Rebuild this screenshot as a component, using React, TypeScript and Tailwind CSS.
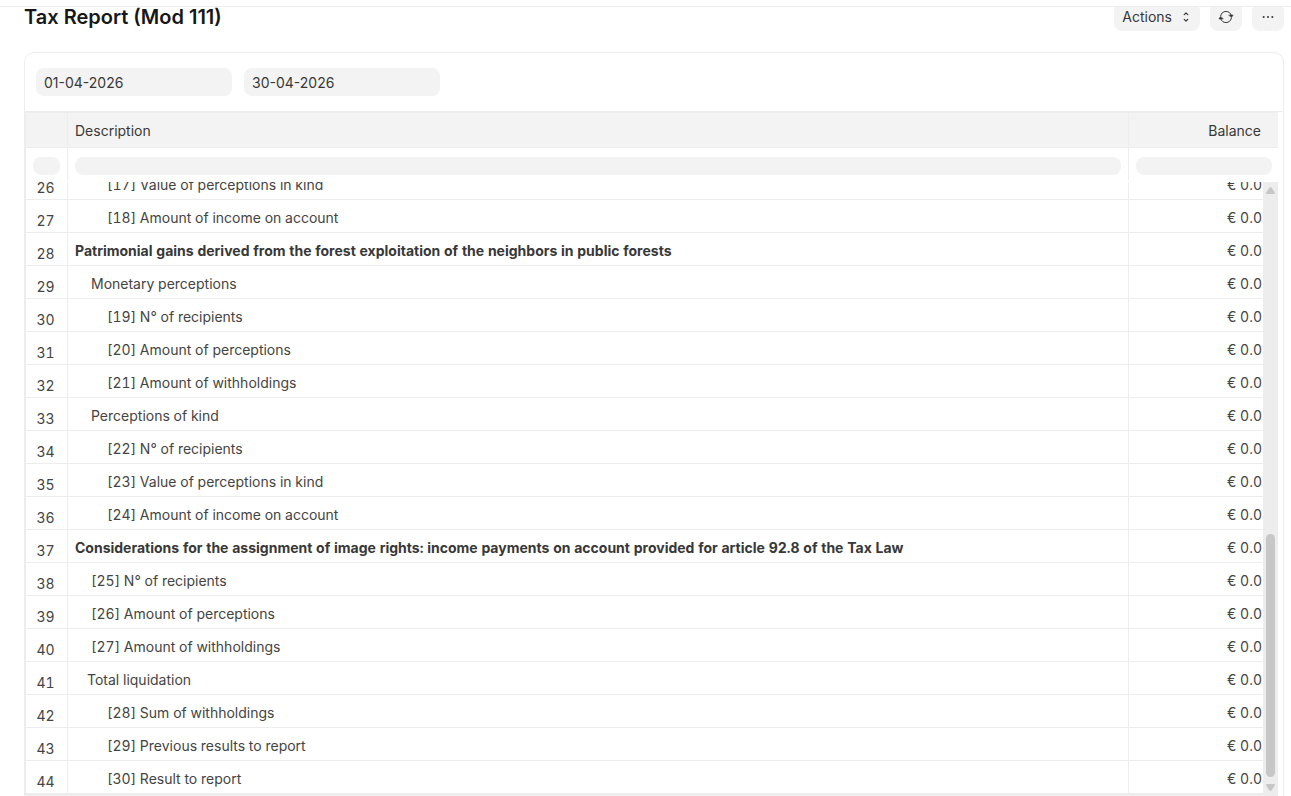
import React from "react";

type Level = "root" | "total" | "child" | "leaf";
type Row = { n: number; text: string; level: Level; bold?: boolean };

const rows: Row[] = [
  { n: 26, text: "[17] Value of perceptions in kind", level: "leaf" },
  { n: 27, text: "[18] Amount of income on account", level: "leaf" },
  { n: 28, text: "Patrimonial gains derived from the forest exploitation of the neighbors in public forests", level: "root", bold: true },
  { n: 29, text: "Monetary perceptions", level: "child" },
  { n: 30, text: "[19] N° of recipients", level: "leaf" },
  { n: 31, text: "[20] Amount of perceptions", level: "leaf" },
  { n: 32, text: "[21] Amount of withholdings", level: "leaf" },
  { n: 33, text: "Perceptions of kind", level: "child" },
  { n: 34, text: "[22] N° of recipients", level: "leaf" },
  { n: 35, text: "[23] Value of perceptions in kind", level: "leaf" },
  { n: 36, text: "[24] Amount of income on account", level: "leaf" },
  { n: 37, text: "Considerations for the assignment of image rights: income payments on account provided for article 92.8 of the Tax Law", level: "root", bold: true },
  { n: 38, text: "[25] N° of recipients", level: "child" },
  { n: 39, text: "[26] Amount of perceptions", level: "child" },
  { n: 40, text: "[27] Amount of withholdings", level: "child" },
  { n: 41, text: "Total liquidation", level: "total" },
  { n: 42, text: "[28] Sum of withholdings", level: "leaf" },
  { n: 43, text: "[29] Previous results to report", level: "leaf" },
  { n: 44, text: "[30] Result to report", level: "leaf" },
];

const indent: Record<Level, string> = {
  root: "pl-[7px]",
  total: "pl-[19px]",
  child: "pl-[23px]",
  leaf: "pl-[39px]",
};

function PageHeader() {
  return (
    <header className="mt-1.5 flex h-[25px] shrink-0 items-end justify-between overflow-hidden border-t border-[#ededed] pr-[7px] pl-6">
      <h1 className="text-xl leading-7 font-semibold text-[#171717]">Tax Report (Mod 111)</h1>
      <div className="flex gap-2.5">
        <button type="button" className="flex h-7 items-center gap-2 rounded-lg bg-[#f3f3f3] px-2 text-sm text-[#383838]">
          Actions
          <svg width="12" height="12" viewBox="0 0 12 12" fill="none" stroke="currentColor" strokeWidth="1.2" strokeLinecap="round" strokeLinejoin="round">
            <path d="M4.2 3.6 6 2 7.8 3.6M4.2 8.4 6 10 7.8 8.4" />
          </svg>
        </button>
        <button type="button" aria-label="Refresh" className="flex h-7 w-8 items-center justify-center rounded-lg bg-[#f3f3f3] text-[#383838]">
          <svg width="16" height="16" viewBox="0 0 16 16" fill="none" stroke="currentColor" strokeLinecap="round" strokeLinejoin="round">
            <path d="M2.7 6.6a5.5 5.5 0 0 1 10.6-.2M13.3 9.4a5.5 5.5 0 0 1-10.6.2" />
            <path fill="currentColor" strokeWidth=".6" d="M11.1 6h4l-1.6 2.4zM4.9 10h-4l1.6-2.4z" />
          </svg>
        </button>
        <button type="button" aria-label="More options" className="flex h-7 w-8 items-center justify-center rounded-lg bg-[#f3f3f3] text-[#383838]">
          <svg width="16" height="16" viewBox="0 0 16 16" fill="currentColor">
            <circle cx="3.7" cy="8" r="1" />
            <circle cx="8" cy="8" r="1" />
            <circle cx="12.3" cy="8" r="1" />
          </svg>
        </button>
      </div>
    </header>
  );
}

function Scrollbar() {
  return (
    <div aria-hidden="true" className="flex w-[15px] shrink-0 flex-col items-center bg-[#ededed] pt-[5px] pb-[3px]">
      <svg width="9" height="7" viewBox="0 0 9 7" fill="#c7c7c7">
        <path d="M4.5 0C5 0 5.4.3 5.7.8L8.8 5.5C9.2 6.2 9 7 8 7H1C0 7-.2 6.2.2 5.5L3.3.8C3.6.3 4 0 4.5 0Z" />
      </svg>
      <div className="grow-[340]" />
      <div className="w-[9px] grow-[243] rounded-full bg-[#c7c7c7]" />
      <svg className="mt-[7px]" width="9" height="7" viewBox="0 0 9 7" fill="#c7c7c7">
        <path d="M4.5 7C4 7 3.6 6.7 3.3 6.2L.2 1.5C-.2.8 0 0 1 0H8C9 0 9.2.8 8.8 1.5L5.7 6.2C5.4 6.7 5 7 4.5 7Z" />
      </svg>
    </div>
  );
}

export default function App() {
  return (
    <div className="flex h-screen flex-col overflow-hidden bg-white font-['Inter','Liberation_Sans',sans-serif] text-sm text-[#383838]">
      <PageHeader />
      <main className="mt-[21px] mr-[7px] ml-6 flex min-h-0 flex-1 flex-col rounded-t-[10px] border border-b-0 border-[#ededed]">
        <form className="flex gap-3 px-[11px] py-[15px]">
          <input aria-label="From date" defaultValue="01-04-2026" className="h-7 w-[196px] rounded-lg bg-[#f3f3f3] px-2 outline-none" />
          <input aria-label="To date" defaultValue="30-04-2026" className="h-7 w-[196px] rounded-lg bg-[#f3f3f3] px-2 outline-none" />
        </form>
        <div className="border-t border-[#ededed]" />
        <div className="mr-[5px] flex min-h-0 flex-1 flex-col border-l border-[#ededed]">
          <table className="w-full shrink-0 table-fixed border-separate border-spacing-0">
            <colgroup>
              <col className="w-[42px]" />
              <col />
              <col className="w-[149px]" />
            </colgroup>
            <thead>
              <tr className="h-9 bg-[#f3f3f3]">
                <th aria-label="Row" className="border-t border-r border-b border-[#ededed]" />
                <th className="border-t border-r border-b border-[#ededed] px-[7px] pt-0.5 text-left font-normal">Description</th>
                <th className="border-t border-b border-[#ededed] pt-0.5 pr-[17px] text-right font-normal">Balance</th>
              </tr>
              <tr className="h-8">
                <td className="border-r border-[#ededed] px-[7px]">
                  <input aria-label="Filter rows" className="mt-[3px] block h-[18px] w-full rounded-lg bg-[#f3f3f3] px-1 text-xs outline-none" />
                </td>
                <td className="border-r border-[#ededed] px-[7px]">
                  <input aria-label="Filter description" className="mt-[3px] block h-[18px] w-full rounded-lg bg-[#f3f3f3] px-2 text-xs outline-none" />
                </td>
                <td className="pr-1.5 pl-[7px]">
                  <input aria-label="Filter balance" className="mt-[3px] block h-[18px] w-full rounded-lg bg-[#f3f3f3] px-2 text-xs outline-none" />
                </td>
              </tr>
            </thead>
          </table>
          <div className="mt-0.5 flex min-h-0 flex-1">
            <div className="flex min-w-0 flex-1 flex-col justify-end overflow-hidden">
              <table className="w-full shrink-0 table-fixed border-separate border-spacing-0 leading-5 text-[#444444] tabular-nums">
                <colgroup>
                  <col className="w-[42px]" />
                  <col />
                  <col className="w-[134px]" />
                </colgroup>
                <tbody>
                  {rows.map((r) => (
                    <tr key={r.n} className="h-[33px] align-top">
                      <td className="border-r border-b border-[#ededed] pt-[11px] pr-0.5 text-center">{r.n}</td>
                      <td className={`truncate border-r border-b border-[#ededed] pt-2 ${indent[r.level]} ${r.bold ? "font-bold text-[#383838]" : ""}`}>{r.text}</td>
                      <td className="border-b border-[#ededed] pt-2 pr-px text-right">€ 0.0</td>
                    </tr>
                  ))}
                </tbody>
              </table>
            </div>
            <Scrollbar />
          </div>
          <div className="h-0.5 shrink-0 bg-[#ededed]" />
        </div>
      </main>
    </div>
  );
}
